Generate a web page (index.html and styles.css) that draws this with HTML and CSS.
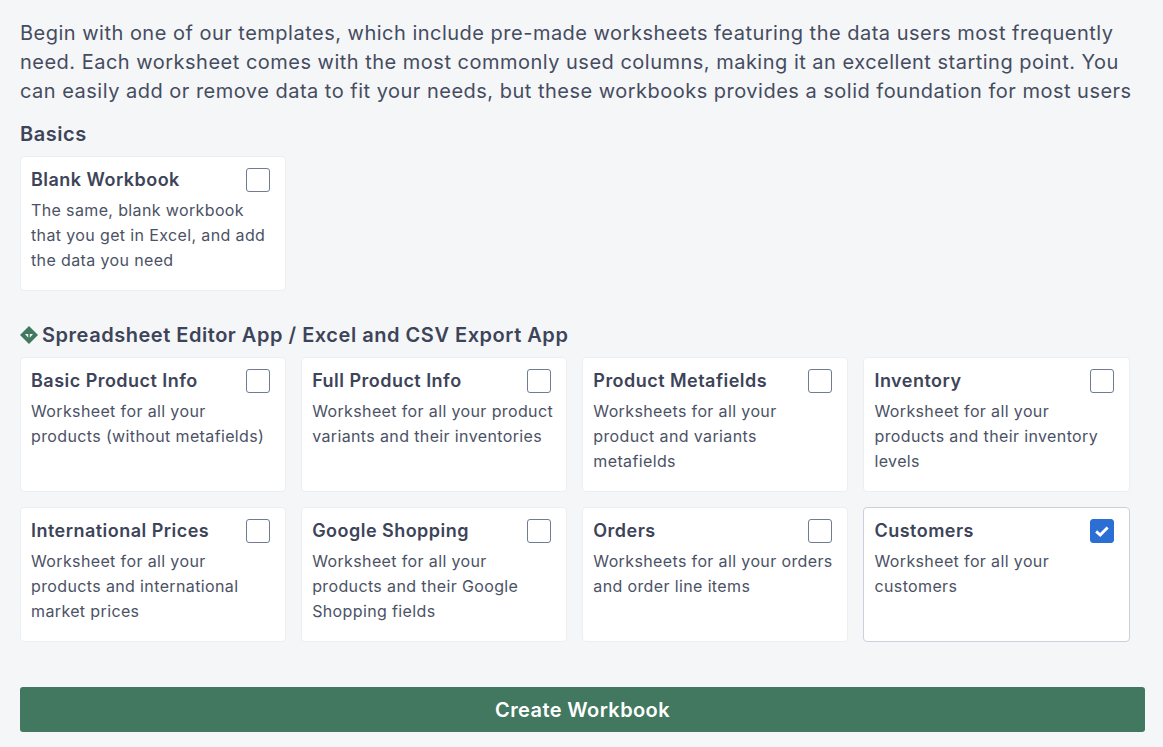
FILE: index.html
```html
<!DOCTYPE html>
<html lang="en">
<head>
    <meta charset="UTF-8">
    <title>Create Workbook</title>
    <link rel="stylesheet" href="styles.css">
</head>
<body>
    <p class="intro">Begin with one of our templates, which include pre-made worksheets featuring the data users most frequently need. Each worksheet comes with the most commonly used columns, making it an excellent starting point. You can easily add or remove data to fit your needs, but these workbooks provides a solid foundation for most users</p>

    <h2 class="section-title">Basics</h2>
    <div class="card-grid basics">
        <div class="card">
            <div class="card-head"><h3>Blank Workbook</h3><span class="check"></span></div>
            <p>The same, blank workbook that you get in Excel, and add the data you need</p>
        </div>
    </div>

    <h2 class="section-title app-title">
        <svg class="app-icon" viewBox="0 0 18 18" width="18" height="18">
            <path fill="#41785f" d="M9 0 18 9 9 18 0 9z"/>
            <path fill="#f5f6f8" d="M5 8h3.2v3.8zM9.8 8H13L9.8 11.8z"/>
        </svg>
        Spreadsheet Editor App / Excel and CSV Export App
    </h2>
    <div class="card-grid">
        <div class="card">
            <div class="card-head"><h3>Basic Product Info</h3><span class="check"></span></div>
            <p>Worksheet for all your products (without metafields)</p>
        </div>
        <div class="card">
            <div class="card-head"><h3>Full Product Info</h3><span class="check"></span></div>
            <p>Worksheet for all your product variants and their inventories</p>
        </div>
        <div class="card">
            <div class="card-head"><h3>Product Metafields</h3><span class="check"></span></div>
            <p>Worksheets for all your product and variants metafields</p>
        </div>
        <div class="card">
            <div class="card-head"><h3>Inventory</h3><span class="check"></span></div>
            <p>Worksheet for all your products and their inventory levels</p>
        </div>
        <div class="card">
            <div class="card-head"><h3>International Prices</h3><span class="check"></span></div>
            <p>Worksheet for all your products and international market prices</p>
        </div>
        <div class="card">
            <div class="card-head"><h3>Google Shopping</h3><span class="check"></span></div>
            <p>Worksheet for all your products and their Google Shopping fields</p>
        </div>
        <div class="card">
            <div class="card-head"><h3>Orders</h3><span class="check"></span></div>
            <p>Worksheets for all your orders and order line items</p>
        </div>
        <div class="card selected">
            <div class="card-head">
                <h3>Customers</h3>
                <span class="check checked">
                    <svg viewBox="0 0 16 16" width="18" height="18"><path d="M2.8 8.4 6.4 11.6 13 4.8" fill="none" stroke="#fff" stroke-width="2.6"/></svg>
                </span>
            </div>
            <p>Worksheet for all your customers</p>
        </div>
    </div>

    <button class="create-btn">Create Workbook</button>
</body>
</html>
```

FILE: styles.css
```css
* {
    box-sizing: border-box;
}
html, body {
    height: 100%;
}
body {
    font-family: Inter, "Liberation Sans", sans-serif;
    color: #3d4459;
    background: #f5f6f8;
    margin: 0;
    padding: 19px 18px 15px 20px;
    overflow: hidden;
}
.intro {
    font-size: 20px;
    letter-spacing: 0.49px;
    line-height: 29px;
    margin: 0;
    color: #454c60;
}
.section-title {
    font-size: 20px;
    letter-spacing: 0.53px;
    line-height: 28px;
    font-weight: 600;
    margin: 14px 0 8px;
}
.app-title {
    display: flex;
    align-items: center;
    gap: 4px;
    margin-top: 30px;
}
.app-icon {
    flex: none;
}
.card-grid {
    display: grid;
    grid-template-columns: repeat(4, 266.16px);
    gap: 15px;
}
.card {
    background: white;
    border: 1px solid #eceef2;
    border-radius: 4px;
    height: 135px;
    padding: 10px;
}
.card.selected {
    border-color: #c9d1dc;
}
.card-head {
    display: flex;
    justify-content: space-between;
    align-items: center;
    height: 25px;
    margin-bottom: 6px;
    padding-right: 5px;
}
.card h3 {
    font-size: 18px;
    letter-spacing: 0.47px;
    font-weight: 600;
    margin: 0;
}
.card p {
    font-size: 16px;
    letter-spacing: 0.37px;
    line-height: 25px;
    margin: 0;
    color: #4b5265;
}
.check {
    display: block;
    width: 24px;
    height: 24px;
    background: white;
    border: 1.5px solid #6f7c91;
    border-radius: 3px;
}
.check.checked {
    display: flex;
    align-items: center;
    justify-content: center;
    background: #2b6fd4;
    border-color: #2b6fd4;
}
.create-btn {
    display: block;
    width: 100%;
    height: 45px;
    margin-top: 45px;
    background: #41785f;
    color: white;
    font-family: inherit;
    font-size: 20px;
    letter-spacing: 0.4px;
    font-weight: 600;
    border: none;
    border-radius: 3px;
    cursor: pointer;
}
```
